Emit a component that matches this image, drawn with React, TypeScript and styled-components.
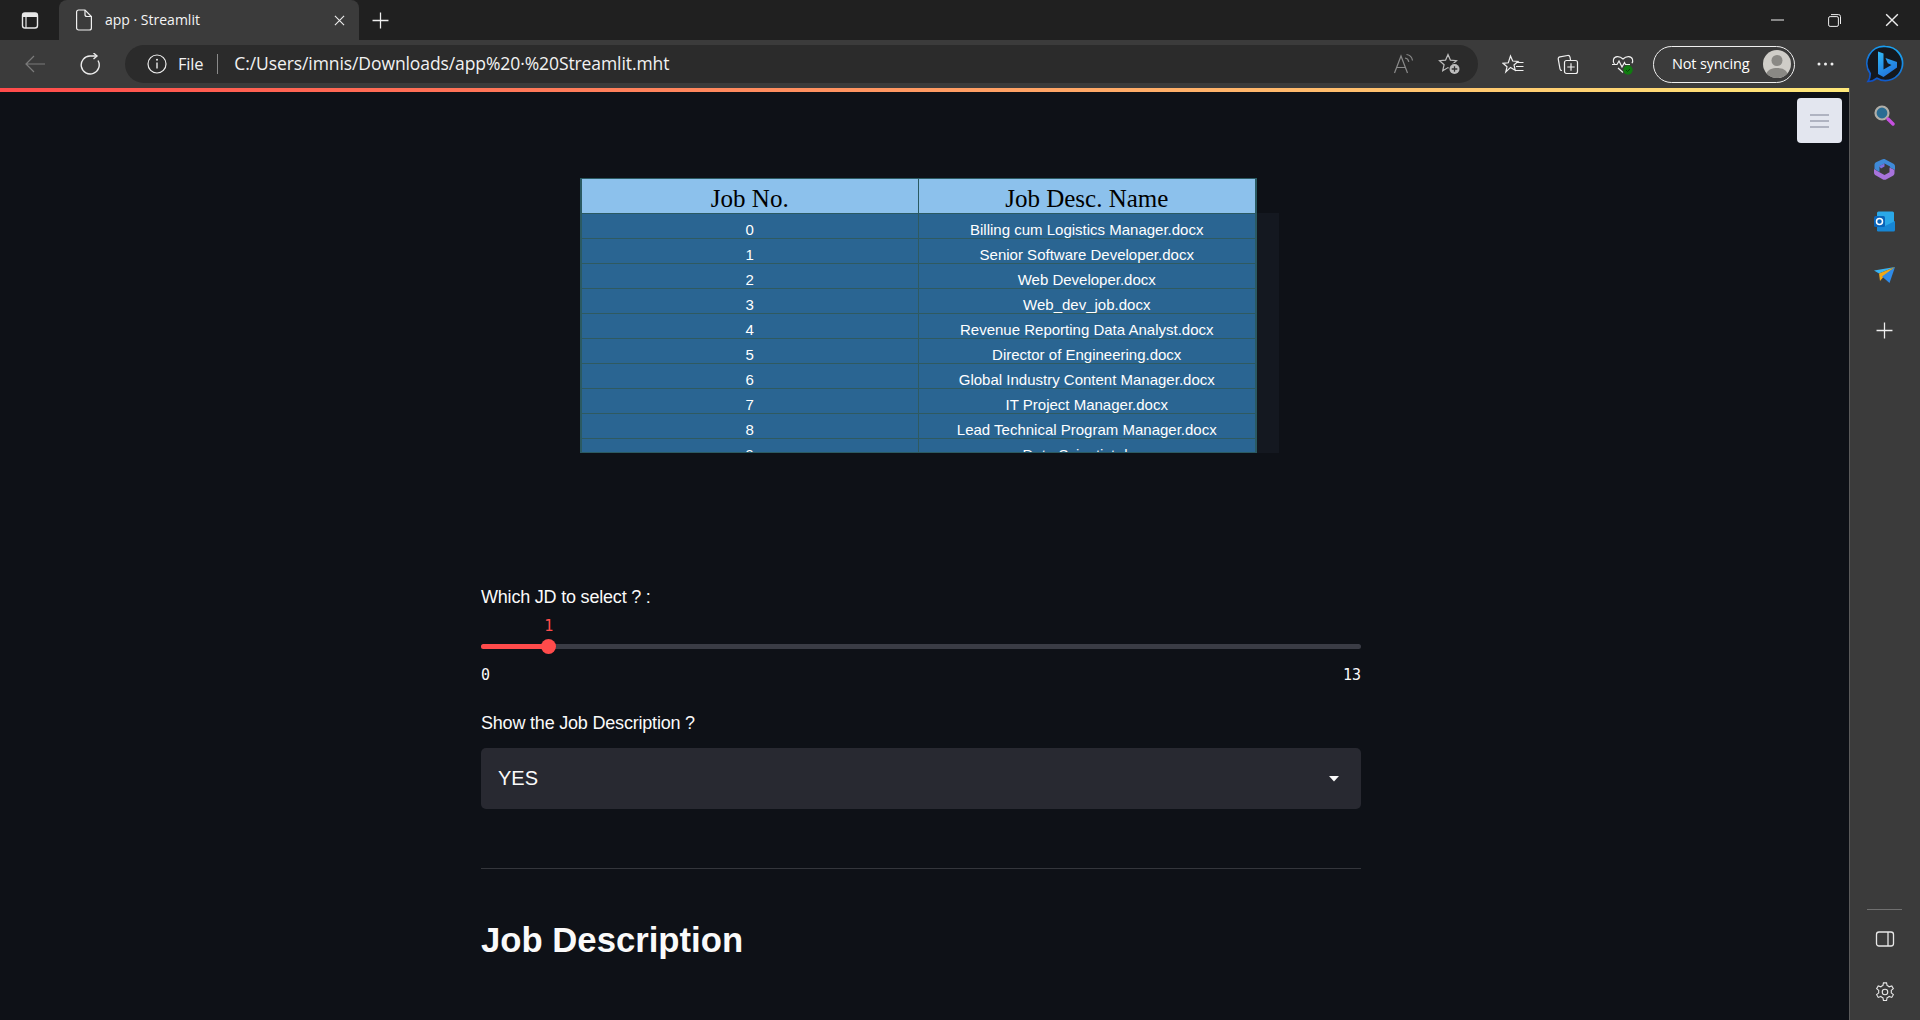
import styled, { createGlobalStyle } from 'styled-components'

const GlobalStyle = createGlobalStyle`
  html, body {
    margin: 0;
    padding: 0;
    height: 100%;
    overflow: hidden;
    background: #0e1117;
  }
  * {
    box-sizing: border-box;
  }
`

const Window = styled.div`
  width: 1920px;
  height: 1020px;
  display: flex;
  flex-direction: column;
  overflow: hidden;
  font-family: 'Open Sans', 'Noto Sans', sans-serif;
  color: #fff;
`

const TabStrip = styled.div`
  height: 40px;
  flex: none;
  display: flex;
  background: #202020;
`

const TabToggle = styled.div`
  width: 59px;
  display: flex;
  align-items: center;
  justify-content: center;
  padding-left: 1px;
`

const ActiveTab = styled.div`
  width: 300px;
  height: 40px;
  padding: 0 14px 0 15px;
  display: flex;
  align-items: center;
  gap: 11px;
  background: #3b3b3b;
  border-radius: 8px 8px 0 0;
`

const TabTitle = styled.span`
  flex: 1;
  padding-bottom: 2px;
  font-size: 14px;
  color: #f4f4f4;
`

const NewTab = styled.div`
  width: 42px;
  display: flex;
  align-items: center;
  justify-content: center;
`

const StripSpacer = styled.div`
  flex: 1;
`

const WindowButton = styled.div`
  width: 57px;
  display: flex;
  align-items: center;
  justify-content: center;
`

const Toolbar = styled.div`
  height: 48px;
  flex: none;
  display: flex;
  align-items: center;
  background: #3b3b3b;
  padding: 0 0 0 14px;
`

const NavButton = styled.div<{ $gap: number }>`
  width: 42px;
  height: 40px;
  margin-right: ${(p) => p.$gap}px;
  display: flex;
  align-items: center;
  justify-content: center;
`

const AddressBar = styled.div`
  width: 1353px;
  height: 38px;
  margin: 0 7.5px 0 -1px;
  padding: 0 5px 0 22px;
  display: flex;
  align-items: center;
  background: #2b2b2b;
  border-radius: 19px;
`

const FileLabel = styled.span`
  margin-left: 11px;
  padding-bottom: 2px;
  font-size: 16.5px;
  letter-spacing: -0.2px;
  color: #f2f2f2;
`

const AddressDivider = styled.div`
  width: 1px;
  height: 20px;
  margin: 0 16px 0 14px;
  background: #8a8a8a;
`

const UrlText = styled.span`
  flex: 1;
  padding-bottom: 2px;
  font-size: 17.5px;
  letter-spacing: -0.09px;
  color: #f2f2f2;
`

const AddressIcon = styled.div`
  width: 46px;
  height: 32px;
  display: flex;
  align-items: center;
  justify-content: center;
`

const ToolIcon = styled.div`
  width: 55px;
  height: 40px;
  display: flex;
  align-items: center;
  justify-content: center;
`

const SyncPill = styled.div`
  width: 142px;
  height: 37px;
  margin-left: 2.5px;
  padding: 0 3px 0 18px;
  display: flex;
  align-items: center;
  justify-content: space-between;
  border: 1.5px solid #f0f0f0;
  border-radius: 19px;
  font-size: 14.5px;
  letter-spacing: -0.15px;
`

const SyncLabel = styled.span`
  padding-bottom: 2px;
`

const MoreButton = styled.div`
  width: 60px;
  display: flex;
  align-items: center;
  justify-content: center;
`

const BingButton = styled.div`
  width: 60px;
  display: flex;
  align-items: center;
  justify-content: center;
`

const Body = styled.div`
  flex: 1;
  display: flex;
  min-height: 0;
`

const Viewport = styled.div`
  position: relative;
  flex: 1;
  min-width: 0;
  display: flex;
  flex-direction: column;
  background: #0e1117;
`

const ProgressLine = styled.div`
  height: 4px;
  flex: none;
  background: linear-gradient(90deg, #ff4b4b, #ffe97a);
`

const MenuButton = styled.div`
  position: absolute;
  top: 10px;
  right: 7px;
  width: 45px;
  height: 45px;
  display: flex;
  flex-direction: column;
  align-items: center;
  justify-content: center;
  gap: 4px;
  background: #e3e6ef;
  border-radius: 4px;
`

const MenuBar = styled.span`
  width: 19px;
  height: 2px;
  background: #afb3c1;
`

const Main = styled.main`
  width: 880px;
  margin-left: 481px;
  padding-top: 86px;
  font-family: 'Liberation Sans', Arial, sans-serif;
`

const TableFrame = styled.div`
  display: flex;
  height: 275px;
  margin-left: 99px;
`

const TableClip = styled.div`
  width: 677px;
  flex: none;
  overflow: hidden;
  border: 1px solid #2b5a62;
  border-left-width: 2px;
  border-right-width: 2px;
`

const ScrollGutter = styled.div`
  width: 22px;
  margin-top: 35px;
  background: #141820;
`

const JobTable = styled.table`
  width: 673px;
  table-layout: fixed;
  border-collapse: separate;
  border-spacing: 0;
  background: #2a6592;
`

const HeadCell = styled.th`
  height: 35px;
  padding: 5px 0 0;
  background: #8cc1ec;
  border-bottom: 1px solid #2b5a62;
  font-family: 'Liberation Serif', 'Times New Roman', serif;
  font-size: 25px;
  font-weight: 400;
  color: #000;
  &:first-child {
    border-right: 1px solid #2b5a62;
  }
`

const BodyCell = styled.td`
  height: 25px;
  padding: 8px 0 0;
  border-bottom: 1px solid #2f5a60;
  font-size: 15px;
  line-height: 16px;
  text-align: center;
  vertical-align: top;
  color: #fff;
  &:first-child {
    border-right: 1px solid #2f5a60;
  }
`

const FieldLabel = styled.div`
  font-size: 18px;
  line-height: 24px;
  letter-spacing: -0.2px;
  color: #fafafa;
`

const SliderField = styled.div`
  margin-top: 132px;
`

const SliderValue = styled.div`
  height: 20px;
  margin-top: 7px;
  font-family: 'DejaVu Sans Mono', monospace;
  font-size: 15px;
  line-height: 20px;
  color: #ff4b4b;
`

const SliderTrack = styled.div`
  position: relative;
  height: 5px;
  margin-top: 8px;
  border-radius: 3px;
  background: #3a3c45;
`

const SliderFill = styled.div`
  height: 100%;
  border-radius: 3px 0 0 3px;
  background: #ff4b4b;
`

const SliderThumb = styled.div`
  position: absolute;
  top: -5px;
  width: 15px;
  height: 15px;
  margin-left: -8px;
  border-radius: 50%;
  background: #ff4b4b;
`

const SliderBounds = styled.div`
  display: flex;
  justify-content: space-between;
  margin-top: 16px;
  font-family: 'DejaVu Sans Mono', monospace;
  font-size: 15px;
  line-height: 20px;
  color: #fafafa;
`

const SelectField = styled.div`
  margin-top: 26px;
`

const SelectBox = styled.div`
  height: 61px;
  margin-top: 13px;
  padding: 0 22px 0 17px;
  display: flex;
  align-items: center;
  justify-content: space-between;
  background: #282931;
  border-radius: 5px;
  font-size: 20px;
  color: #fafafa;
`

const Divider = styled.hr`
  height: 1px;
  margin: 59px 0 0;
  border: 0;
  background: #34363c;
`

const Heading = styled.h1`
  margin: 49px 0 0;
  font-size: 34.7px;
  line-height: 44px;
  font-weight: 700;
  color: #fafafa;
`

const Sidebar = styled.aside`
  width: 71px;
  flex: none;
  display: flex;
  flex-direction: column;
  align-items: center;
  padding: 1px 1px 2px 0;
  background: #3b3b3b;
  border-left: 1px solid #5a5a5a;
`

const SideIcon = styled.div<{ $shift?: number }>`
  width: 40px;
  height: 53px;
  margin-top: ${(p) => p.$shift ?? 0}px;
  display: flex;
  align-items: center;
  justify-content: center;
`

const SideSpacer = styled.div`
  flex: 1;
`

const SideRule = styled.div`
  width: 35px;
  height: 1px;
  margin-bottom: 2px;
  background: #707070;
`

const rows = [
  'Billing cum Logistics Manager.docx',
  'Senior Software Developer.docx',
  'Web Developer.docx',
  'Web_dev_job.docx',
  'Revenue Reporting Data Analyst.docx',
  'Director of Engineering.docx',
  'Global Industry Content Manager.docx',
  'IT Project Manager.docx',
  'Lead Technical Program Manager.docx',
  'Data Scientist.docx',
]

const selectedJob = 1
const lastJob = 13
const sliderPct = (selectedJob / lastJob) * 100

const Line = { fill: 'none', stroke: 'currentColor', strokeWidth: 1.2 }

const TabsIcon = () => (
  <svg width="20" height="20" viewBox="0 0 20 20" color="#e8e8e8">
    <rect x="2.5" y="3" width="15" height="15" rx="2.5" {...Line} strokeWidth={1.4} />
    <path d="M3 4.500a2 2 0 0 1 2-1.500h10a2 2 0 0 1 2 1.500V7H3z" fill="currentColor" />
    <path d="M6 7v11" {...Line} />
  </svg>
)

const PageIcon = () => (
  <svg width="20" height="24" viewBox="0 0 20 24" color="#f0f0f0">
    <path d="M2.600 4A2 2 0 0 1 4.600 2H11l6.400 6.500V20a2 2 0 0 1-2 2H4.600a2 2 0 0 1-2-2z" {...Line} />
    <path d="M11 2v4.500a2 2 0 0 0 2 2h4.400" {...Line} />
  </svg>
)

const CloseIcon = ({ size = 11, color = '#eee' }: { size?: number; color?: string }) => (
  <svg width={size} height={size} viewBox="0 0 12 12" color={color}>
    <path d="M1 1l10 10M11 1L1 11" {...Line} />
  </svg>
)

const PlusIcon = ({ size = 17, color = '#eee' }: { size?: number; color?: string }) => (
  <svg width={size} height={size} viewBox="0 0 16 16" color={color}>
    <path d="M8 0.500v15M0.500 8h15" {...Line} />
  </svg>
)

const BackIcon = () => (
  <svg width="22" height="20" viewBox="0 0 22 20" color="#7b7b7b">
    <path d="M21 10H2M10 2l-8 8 8 8" {...Line} />
  </svg>
)

const ReloadIcon = () => (
  <svg width="22" height="22" viewBox="0 0 22 22" color="#ececec">
    <path d="M19 7.500A9 9 0 1 1 11 3h7" {...Line} strokeWidth={1.4} />
    <path d="M14.500 0l3.500 3-3.500 3" {...Line} strokeWidth={1.4} />
  </svg>
)

const InfoIcon = () => (
  <svg width="20" height="20" viewBox="0 0 20 20" color="#ececec">
    <circle cx="10" cy="10" r="9" {...Line} />
    <path d="M10 8.500v6" {...Line} strokeWidth={1.4} />
    <circle cx="10" cy="5.800" r="1" fill="currentColor" />
  </svg>
)

const ReadAloudIcon = () => (
  <svg width="22" height="22" viewBox="0 0 22 22" color="#8a8a8a">
    <path d="M1.500 20L8 3l6.500 17M3.700 14.500h8.600" {...Line} />
    <path d="M12 5c2 .3 3.500 1.800 3.800 3.800M13.500 1.500c3.300.5 5.500 2.800 6 6" {...Line} />
  </svg>
)

const FavAddIcon = () => (
  <svg width="24" height="24" viewBox="0 0 24 24" color="#bdbdbd">
    <path d="M10 2.500l2.400 5.600 6.100.6-4.600 4 1.400 6L10 15.600l-5.300 3.100 1.400-6-4.600-4 6.100-.6z" {...Line} />
    <circle cx="16.500" cy="17" r="6" fill="#2b2b2b" />
    <circle cx="16.500" cy="17" r="5" fill="#bdbdbd" />
    <path d="M16.500 14.200v5.600M13.700 17h5.600" stroke="#333" strokeWidth="1.300" />
  </svg>
)

const FavListIcon = () => (
  <svg width="22" height="22" viewBox="0 0 22 22" color="#f0f0f0">
    <path d="M8.500 3l2.200 5 5.300.5-4 3.500 1.200 5.200-4.700-2.800L3.800 19 5 13.800 1 10.300 6.300 9.800z" {...Line} />
    <path d="M14.500 9.500h7M14 13.500h7.500M13 17.500h8.500" {...Line} />
  </svg>
)

const CollectionsIcon = () => (
  <svg width="24" height="24" viewBox="0 0 24 24" color="#f0f0f0">
    <path d="M6 18.500c-1 0-1.800-.6-2-1.700L2.300 7.300C2 6 2.800 5 4 4.800l7.500-1.300c1.200-.2 2.200.5 2.500 1.700l.5 2.800" {...Line} />
    <rect x="8.500" y="8.500" width="13" height="13" rx="2" fill="#3b3b3b" stroke="currentColor" strokeWidth="1.200" />
    <path d="M15 11.300v7.400M11.300 15h7.400" {...Line} />
  </svg>
)

const HealthIcon = () => (
  <svg width="24" height="24" viewBox="0 0 24 24" color="#f0f0f0">
    <path d="M3.500 12C2.300 10.500 2 9 2.500 7.300 3.500 4 8.500 3.500 12 7c3.500-3.500 8.500-3 9.500.3.400 1.500.2 2.700-.5 3.900M7 16l5 4.500" {...Line} />
    <path d="M1 12.500h5l2-3.500 3 6 2.500-4.500 1 2H19" {...Line} />
    <circle cx="17" cy="18" r="4.700" fill="#107c10" />
    <path d="M15 18l1.500 1.500 2.500-2.500" stroke="#0a3d0a" strokeWidth="1" fill="none" />
  </svg>
)

const AvatarIcon = () => (
  <svg width="28" height="28" viewBox="0 0 28 28">
    <circle cx="14" cy="14" r="14" fill="#cfcdc8" />
    <circle cx="14" cy="10.500" r="5.500" fill="#8a8985" />
    <path d="M3.500 23.500C5 19.500 9 18 14 18s9 1.500 10.500 5.500A14 14 0 0 1 14 28 14 14 0 0 1 3.500 23.500z" fill="#8a8985" />
  </svg>
)

const DotsIcon = () => (
  <svg width="17" height="4" viewBox="0 0 17 4">
    <circle cx="2" cy="2" r="1.500" fill="#eee" />
    <circle cx="8.500" cy="2" r="1.500" fill="#eee" />
    <circle cx="15" cy="2" r="1.500" fill="#eee" />
  </svg>
)

const BingBadge = () => (
  <svg width="38" height="38" viewBox="0 0 38 38">
    <defs>
      <linearGradient id="bingRing" x1="0.7" y1="0" x2="0.2" y2="1">
        <stop offset="0" stopColor="#1aa5f2" />
        <stop offset="1" stopColor="#0f4fc4" />
      </linearGradient>
      <linearGradient id="bingLetter" x1="0.2" y1="0" x2="0.7" y2="1">
        <stop offset="0" stopColor="#2fb4f4" />
        <stop offset="1" stopColor="#1f6fdc" />
      </linearGradient>
    </defs>
    <path
      d="M19.500 1.500a17 17 0 1 1-8.500 31.700C8.500 35.300 5.500 36.500 2 36.500c1.500-2 2.300-4.500 2.200-8A17 17 0 0 1 19.500 1.500z"
      fill="#14181f"
      stroke="url(#bingRing)"
      strokeWidth="1.700"
    />
    <path
      d="M12 6.500l5.500 2v16l8-4.500-3.700-1.700-2.300-5.400L31 17v5.500L17.500 32 12 29z"
      fill="url(#bingLetter)"
    />
  </svg>
)

const WindowMinIcon = () => (
  <svg width="13" height="2" viewBox="0 0 13 2">
    <path d="M0 1h13" stroke="#eee" strokeWidth="1" />
  </svg>
)

const WindowRestoreIcon = () => (
  <svg width="13" height="13" viewBox="0 0 13 13" color="#eee">
    <rect x="0.600" y="2.600" width="9.800" height="9.800" rx="1.500" fill="none" stroke="currentColor" />
    <path d="M3 0.600h7.500a2 2 0 0 1 2 2V10" fill="none" stroke="currentColor" />
  </svg>
)

const SearchBadge = () => (
  <svg width="21" height="21" viewBox="0 0 21 21">
    <circle cx="8" cy="8" r="6.500" fill="#2a6c93" stroke="#b0aea8" strokeWidth="2.200" />
    <path d="M14 14l5 5" stroke="#c650e0" strokeWidth="3.400" strokeLinecap="round" />
  </svg>
)

const CopilotBadge = () => (
  <svg width="21" height="22" viewBox="0 0 21 22">
    <path d="M10.500 1l8.500 4.500c1.300.7 2 1.700 2 3V12l-5-2.500V8.500l-5.500-3-5 2.800V14l-5-3V7c0-1.500.7-2.400 2-3.100L8 1.500c1-.6 1.700-.7 2.500-.5z" fill="#3f8ad8" />
    <path d="M0 11l5 3 5.500 3 5-2.800V9.500l5 2.500v3c0 1.300-.7 2.300-2 3l-6 3.200c-1.300.7-2.700.7-4 0L2 17.500C.7 16.800 0 15.800 0 14.500z" fill="#a873dc" />
    <path d="M5 8.300l5.500-2.800v3L7 10.500z" fill="#7d6fe0" />
  </svg>
)

const OutlookBadge = () => (
  <svg width="21" height="21" viewBox="0 0 21 21">
    <rect x="3" y="0.500" width="17" height="17" rx="1.500" fill="#2aa8e8" />
    <path d="M3 20V11l8 4 10-5v9a1.500 1.500 0 0 1-1.500 1.500H4z" fill="#1786d4" />
    <rect x="0" y="5" width="11" height="11" rx="1.500" fill="#0a64b8" />
    <circle cx="5.500" cy="10.500" r="3" fill="none" stroke="#fff" strokeWidth="1.500" />
  </svg>
)

const SendBadge = () => (
  <svg width="21" height="16" viewBox="0 0 21 16">
    <path d="M0 3.500L21 0 5 6.500z" fill="#3ab4f2" />
    <path d="M5 6.500L6 14l3-3.500L21 0z" fill="#f0a818" />
    <path d="M21 0L8 9.500 15.500 16z" fill="#2f8be8" />
  </svg>
)

const PanelIcon = () => (
  <svg width="20" height="20" viewBox="0 0 20 20" color="#e8e8e8">
    <rect x="1.500" y="3" width="17" height="14" rx="2.500" {...Line} strokeWidth={1.300} />
    <path d="M13 3v14" {...Line} strokeWidth={1.300} />
  </svg>
)

const GearIcon = () => (
  <svg width="22" height="22" viewBox="0 0 24 24" color="#e8e8e8">
    <path
      d="M10.300 2h3.400l.6 3a7.500 7.500 0 0 1 2.200 1.300l2.900-1 1.700 3-2.300 2a7.500 7.500 0 0 1 0 2.600l2.300 2-1.700 3-2.900-1a7.500 7.500 0 0 1-2.200 1.300l-.6 3h-3.400l-.6-3a7.500 7.500 0 0 1-2.200-1.300l-2.900 1-1.700-3 2.300-2a7.500 7.500 0 0 1 0-2.600l-2.300-2 1.700-3 2.900 1a7.500 7.500 0 0 1 2.200-1.300z"
      {...Line}
    />
    <circle cx="12" cy="12" r="3" {...Line} />
  </svg>
)

const Caret = () => (
  <svg width="10" height="6" viewBox="0 0 10 6">
    <path d="M0 0h10L5 5.500z" fill="#fafafa" />
  </svg>
)

export default function App() {
  return (
    <Window>
      <GlobalStyle />
      <TabStrip>
        <TabToggle>
          <TabsIcon />
        </TabToggle>
        <ActiveTab>
          <PageIcon />
          <TabTitle>app · Streamlit</TabTitle>
          <CloseIcon />
        </ActiveTab>
        <NewTab>
          <PlusIcon />
        </NewTab>
        <StripSpacer />
        <WindowButton>
          <WindowMinIcon />
        </WindowButton>
        <WindowButton>
          <WindowRestoreIcon />
        </WindowButton>
        <WindowButton>
          <CloseIcon size={14} />
        </WindowButton>
      </TabStrip>
      <Toolbar>
        <NavButton $gap={13}>
          <BackIcon />
        </NavButton>
        <NavButton $gap={15}>
          <ReloadIcon />
        </NavButton>
        <AddressBar>
          <InfoIcon />
          <FileLabel>File</FileLabel>
          <AddressDivider />
          <UrlText>C:/Users/imnis/Downloads/app%20·%20Streamlit.mht</UrlText>
          <AddressIcon>
            <ReadAloudIcon />
          </AddressIcon>
          <AddressIcon>
            <FavAddIcon />
          </AddressIcon>
        </AddressBar>
        <ToolIcon>
          <FavListIcon />
        </ToolIcon>
        <ToolIcon>
          <CollectionsIcon />
        </ToolIcon>
        <ToolIcon>
          <HealthIcon />
        </ToolIcon>
        <SyncPill>
          <SyncLabel>Not syncing</SyncLabel>
          <AvatarIcon />
        </SyncPill>
        <MoreButton>
          <DotsIcon />
        </MoreButton>
        <BingButton>
          <BingBadge />
        </BingButton>
      </Toolbar>
      <Body>
        <Viewport>
          <ProgressLine />
          <MenuButton>
            <MenuBar />
            <MenuBar />
            <MenuBar />
          </MenuButton>
          <Main>
            <TableFrame>
              <TableClip>
                <JobTable>
                  <thead>
                    <tr>
                      <HeadCell>Job No.</HeadCell>
                      <HeadCell>Job Desc. Name</HeadCell>
                    </tr>
                  </thead>
                  <tbody>
                    {rows.map((name, i) => (
                      <tr key={name}>
                        <BodyCell>{i}</BodyCell>
                        <BodyCell>{name}</BodyCell>
                      </tr>
                    ))}
                  </tbody>
                </JobTable>
              </TableClip>
              <ScrollGutter />
            </TableFrame>
            <SliderField>
              <FieldLabel>Which JD to select ? :</FieldLabel>
              <SliderValue style={{ paddingLeft: `calc(${sliderPct}% - 4.5px)` }}>{selectedJob}</SliderValue>
              <SliderTrack>
                <SliderFill style={{ width: `${sliderPct}%` }} />
                <SliderThumb style={{ left: `${sliderPct}%` }} />
              </SliderTrack>
              <SliderBounds>
                <span>0</span>
                <span>{lastJob}</span>
              </SliderBounds>
            </SliderField>
            <SelectField>
              <FieldLabel>Show the Job Description ?</FieldLabel>
              <SelectBox>
                YES
                <Caret />
              </SelectBox>
            </SelectField>
            <Divider />
            <Heading>Job Description</Heading>
          </Main>
        </Viewport>
        <Sidebar>
          <SideIcon>
            <SearchBadge />
          </SideIcon>
          <SideIcon>
            <CopilotBadge />
          </SideIcon>
          <SideIcon>
            <OutlookBadge />
          </SideIcon>
          <SideIcon>
            <SendBadge />
          </SideIcon>
          <SideIcon $shift={3}>
            <PlusIcon />
          </SideIcon>
          <SideSpacer />
          <SideRule />
          <SideIcon>
            <PanelIcon />
          </SideIcon>
          <SideIcon>
            <GearIcon />
          </SideIcon>
        </Sidebar>
      </Body>
    </Window>
  )
}
